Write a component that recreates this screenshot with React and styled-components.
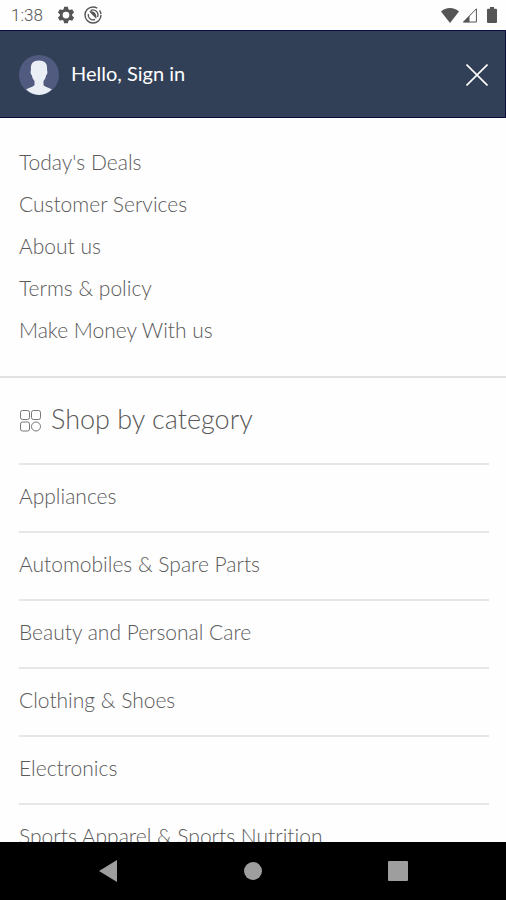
import React from "react";
import styled, { createGlobalStyle } from "styled-components";

const GlobalStyle = createGlobalStyle`
  * {
    box-sizing: border-box;
  }

  body {
    margin: 0;
    background-color: #fefefe;
    font-family: Lato, "Open Sans", sans-serif;
    font-weight: 300;
    font-variant-ligatures: none;
    color: #5a5a5a;
  }

  a {
    color: inherit;
    text-decoration: none;
  }

  button {
    padding: 0;
    border: none;
    background: none;
    cursor: pointer;
  }

  svg {
    display: block;
  }

  ul {
    margin: 0;
    padding: 0;
    list-style: none;
  }
`;

const Screen = styled.div`
  display: flex;
  flex-direction: column;
  height: 100vh;
  overflow: hidden;
`;

const StatusBar = styled.div`
  display: flex;
  align-items: center;
  justify-content: space-between;
  flex-shrink: 0;
  height: 30px;
  padding: 0 8px 0 11px;
  color: #555555;

  div {
    display: flex;
    align-items: center;
  }

  time {
    width: 46px;
    font-family: Roboto, sans-serif;
    font-size: 17px;
    font-weight: 300;
  }

  .notifications {
    gap: 9px;
  }

  .system {
    gap: 3px;
  }
`;

const Header = styled.header`
  display: flex;
  align-items: center;
  justify-content: space-between;
  flex-shrink: 0;
  height: 88px;
  padding: 2px 17px 0 19px;
  color: #ffffff;
  background-color: #324057;
  border: solid #0c0d3c;
  border-width: 1px 1px 1px 0;
`;

const SignIn = styled.a`
  display: flex;
  align-items: center;
  gap: 12px;
  font-size: 20px;
  font-weight: 400;
  line-height: 24px;

  span {
    padding-bottom: 4px;
  }
`;

const Menu = styled.main`
  flex: 1;
  min-height: 0;
  overflow: hidden;
`;

const Links = styled.ul`
  padding: 23px 19px 25px;
  border-bottom: 2px solid #e2e2e2;

  a {
    display: block;
    font-size: 21px;
    line-height: 42px;
  }
`;

const Title = styled.h2`
  display: flex;
  align-items: center;
  gap: 9px;
  height: 85px;
  margin: 0 19px;
  font-size: 27px;
  font-weight: 300;

  span {
    padding-bottom: 4px;
  }
`;

const Categories = styled.ul`
  margin: 0 17px 0 19px;

  li {
    border-top: 2px solid #e6e6e6;
  }

  a {
    display: block;
    padding-bottom: 4px;
    font-size: 21px;
    line-height: 62px;
  }
`;

const NavBar = styled.nav`
  display: flex;
  align-items: center;
  justify-content: center;
  gap: 24%;
  flex-shrink: 0;
  height: 58px;
  background-color: #000000;
  color: #9e9e9e;
`;

const NavButton = styled.button`
  display: flex;
  justify-content: center;
  width: 24px;
  color: inherit;
`;

const links = [
  "Today's Deals",
  "Customer Services",
  "About us",
  "Terms & policy",
  "Make Money With us",
];

const categories = [
  "Appliances",
  "Automobiles & Spare Parts",
  "Beauty and Personal Care",
  "Clothing & Shoes",
  "Electronics",
  "Sports Apparel & Sports Nutrition",
];

function GearIcon() {
  return (
    <svg width="18" height="18" viewBox="0 0 24 24" fill="currentColor">
      <path
        fillRule="evenodd"
        d="M9.4 1h5.2l.6 3.3 1.9 1.1 3.1-1.2 2.6 4.6-2.6 2.1v2.2l2.6 2.1-2.6 4.6-3.1-1.2-1.9 1.1-.6 3.3H9.4l-.6-3.3-1.9-1.1-3.1 1.2-2.6-4.6 2.6-2.1v-2.2L1.2 8.8l2.6-4.6 3.1 1.2 1.9-1.1zM12 7.5a4.5 4.5 0 1 0 0 9 4.5 4.5 0 0 0 0-9z"
      />
    </svg>
  );
}

function SyncIcon() {
  return (
    <svg width="18" height="18" viewBox="0 0 18 18" fill="none" stroke="currentColor">
      <circle cx="9" cy="9" r="8" strokeWidth="1.4" strokeDasharray="42 3 4 2" />
      <path d="M4.4 8a4.8 4.8 0 0 0 6.600 5.400M6.500 4.600A5 5 0 0 1 13.500 11" strokeWidth="1.300" />
      <path d="M5.200 5.600c3-1.300 7.200.700 7.200 5.600l-.2 1.600z" fill="currentColor" stroke="none" />
    </svg>
  );
}

function WifiIcon() {
  return (
    <svg width="18" height="15" viewBox="0 0 18 15" fill="currentColor">
      <path d="M9 15 0 3.6C2.4 1.2 5.5 0 9 0s6.600 1.200 9 3.600z" />
    </svg>
  );
}

function SignalIcon() {
  return (
    <svg width="16" height="16" viewBox="0 0 16 16">
      <path d="M1.5 15 14.4 1.8V15z" fill="none" stroke="currentColor" strokeWidth="1" />
      <path d="M1 15.3 7.5 8.800v6.500z" fill="currentColor" />
    </svg>
  );
}

function BatteryIcon() {
  return (
    <svg width="17" height="16" viewBox="-6 0 17 16" fill="currentColor">
      <path d="M3 0h4v1.8h2q1 0 1 1V15q0 1-1 1H1q-1 0-1-1V2.8q0-1 1-1h2z" />
    </svg>
  );
}

function Avatar() {
  return (
    <svg width="40" height="40" viewBox="0 0 40 40">
      <circle cx="20" cy="20" r="20" fill="#515b80" />
      <path
        d="M20 5.500c-5.600 0-8.300 2.800-8.100 8 0 1.200.1 2-.3 2.900-.2 1.900.4 3.200 1.200 3.700.5 2.800 1.300 4.500 2.700 5.800v4.200c-1.300 2.200-5.300 2.500-8.300 4.400A20 20 0 0 0 20 40a20 20 0 0 0 12.800-5.500c-3-1.900-7-2.200-8.300-4.400v-4.200c1.400-1.300 2.200-3 2.700-5.800.8-.5 1.400-1.800 1.200-3.700-.4-.9-.3-1.700-.3-2.900.2-5.200-2.500-8-8.100-8z"
        fill="#e9eff5"
      />
    </svg>
  );
}

function CloseIcon() {
  return (
    <svg width="22" height="22" viewBox="0 0 22 22" stroke="#ffffff" strokeWidth="1.6">
      <path d="m.5.5 21 21m0-21-21 21" />
    </svg>
  );
}

function GridIcon() {
  return (
    <svg width="23" height="22" viewBox="0 0 23 22" fill="none" stroke="#777777">
      <rect x="1.5" y=".5" width="9" height="9" rx="2" />
      <rect x="12.5" y=".5" width="9" height="9" rx="2" />
      <rect x="1.5" y="12" width="9" height="9" rx="2" />
      <circle cx="17" cy="16.5" r="4.5" />
    </svg>
  );
}

function App() {
  return (
    <>
      <GlobalStyle />
      <Screen>
        <StatusBar>
          <div>
            <time>1:38</time>
            <div className="notifications">
              <GearIcon />
              <SyncIcon />
            </div>
          </div>
          <div className="system">
            <WifiIcon />
            <SignalIcon />
            <BatteryIcon />
          </div>
        </StatusBar>

        <Header>
          <SignIn href="#signin">
            <Avatar />
            <span>Hello, Sign in</span>
          </SignIn>
          <button aria-label="Close menu">
            <CloseIcon />
          </button>
        </Header>

        <Menu>
          <Links>
            {links.map((link) => (
              <li key={link}>
                <a href="#menu">{link}</a>
              </li>
            ))}
          </Links>
          <Title>
            <GridIcon />
            <span>Shop by category</span>
          </Title>
          <Categories>
            {categories.map((category) => (
              <li key={category}>
                <a href="#category">{category}</a>
              </li>
            ))}
          </Categories>
        </Menu>

        <NavBar>
          <NavButton aria-label="Back">
            <svg width="18" height="22" viewBox="0 0 18 22" fill="currentColor">
              <path d="M18 0v22L0 11z" />
            </svg>
          </NavButton>
          <NavButton aria-label="Home">
            <svg width="18" height="18" viewBox="0 0 18 18" fill="currentColor">
              <circle cx="9" cy="9" r="9" />
            </svg>
          </NavButton>
          <NavButton aria-label="Recent apps">
            <svg width="20" height="20" viewBox="0 0 20 20" fill="currentColor">
              <rect width="20" height="20" rx="1" />
            </svg>
          </NavButton>
        </NavBar>
      </Screen>
    </>
  );
}

export default App;
